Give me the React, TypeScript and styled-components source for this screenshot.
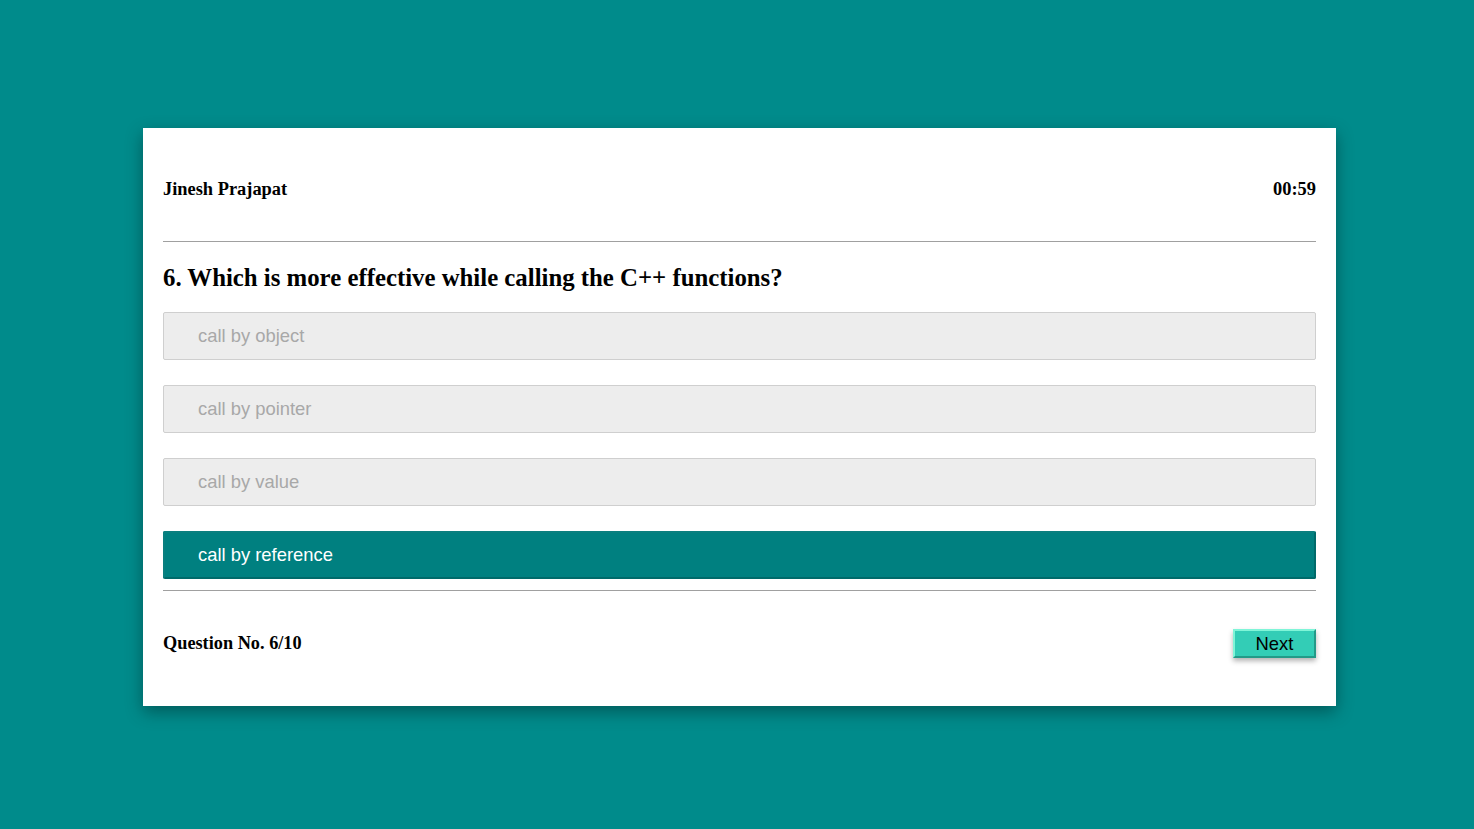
import React from "react";
import styled, { createGlobalStyle } from "styled-components";

const Global = createGlobalStyle`
  html, body { margin: 0; padding: 0; }
  body {
    background: #008b8b;
    font-family: "Liberation Serif", "Times New Roman", serif;
    min-height: 829px;
  }
`;

const Page = styled.div`
  display: flex;
  padding: 128px 138px 0 143px;
`;

const Card = styled.div`
  flex: 1;
  box-sizing: border-box;
  background: #fff;
  padding: 0 20px 48px;
  box-shadow: 0 6px 16px rgba(0, 0, 0, 0.35);
`;

const Header = styled.div`
  display: flex;
  justify-content: space-between;
  align-items: center;
  height: 40px;
  margin-top: 41px;
  font-weight: bold;
  font-size: 18.4px;
  color: #000;
`;

const Divider = styled.hr<{ $top: number }>`
  border: none;
  border-top: 1px solid #a0a0a0;
  margin: ${(p) => p.$top}px 0 0;
  height: 0;
`;

const Question = styled.h2`
  margin: 22px 0 0;
  font-size: 24.8px;
  line-height: 28px;
  font-weight: bold;
  color: #000;
`;

const Options = styled.div`
  display: flex;
  flex-direction: column;
  gap: 25px;
  margin-top: 20px;
`;

const Option = styled.div<{ $selected?: boolean }>`
  box-sizing: border-box;
  height: 48px;
  display: flex;
  align-items: center;
  font-family: "Liberation Sans", Arial, sans-serif;
  font-size: 18.4px;
  border-radius: 2px;
  background: ${(p) => (p.$selected ? "#008080" : "#ededed")};
  color: ${(p) => (p.$selected ? "#ffffff" : "#a8a8a8")};
  border: ${(p) => (p.$selected ? "2px solid #006a6a" : "1px solid #cfcfcf")};
  border-top-color: ${(p) => (p.$selected ? "#0a7f7f" : "#cfcfcf")};
  border-left-color: ${(p) => (p.$selected ? "#0a7f7f" : "#cfcfcf")};
  padding-left: ${(p) => (p.$selected ? "33px" : "34px")};
`;

const Footer = styled.div`
  display: flex;
  justify-content: space-between;
  align-items: center;
  height: 29px;
  margin-top: 38px;
  font-weight: bold;
  font-size: 18.3px;
`;

const NextButton = styled.button`
  box-sizing: border-box;
  width: 83px;
  height: 29px;
  background: #33cdb6;
  color: #000;
  font-family: "Liberation Sans", Arial, sans-serif;
  font-size: 18.4px;
  border: 2px solid;
  border-color: #7ff5d8 #239a88 #239a88 #7ff5d8;
  box-shadow: 0 3px 5px rgba(0, 0, 0, 0.3);
  padding: 0;
  cursor: pointer;
`;

const options = ["call by object", "call by pointer", "call by value", "call by reference"];

export default function App() {
  return (
    <>
      <Global />
      <Page>
        <Card>
          <Header>
            <span>Jinesh Prajapat</span>
            <span>00:59</span>
          </Header>
          <Divider $top={32} />
          <Question>6. Which is more effective while calling the C++ functions?</Question>
          <Options>
            {options.map((o, i) => (
              <Option key={o} $selected={i === 3}>
                {o}
              </Option>
            ))}
          </Options>
          <Divider $top={11} />
          <Footer>
            <span>Question No. 6/10</span>
            <NextButton>Next</NextButton>
          </Footer>
        </Card>
      </Page>
    </>
  );
}
